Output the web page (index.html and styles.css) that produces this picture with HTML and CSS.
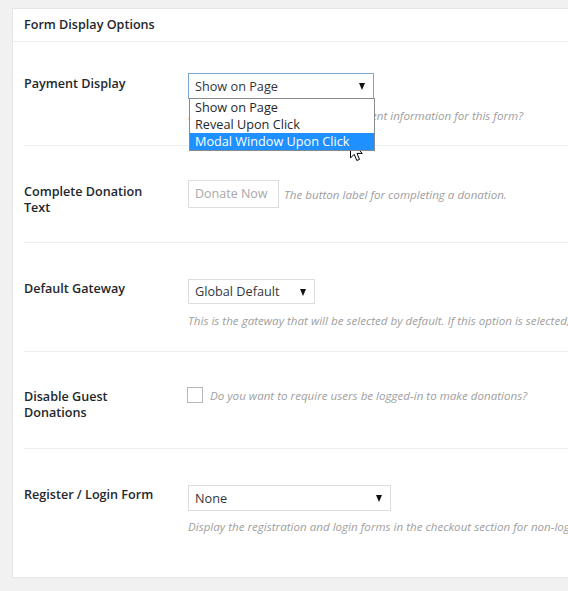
FILE: index.html
```html
<!DOCTYPE html>
<html>
<head>
<meta charset="utf-8">
<link rel="stylesheet" href="styles.css">
</head>
<body>
<div class="panel">
  <div class="panel-head">Form Display Options</div>
  <div class="rows">
    <div class="row r1">
      <div class="label">Payment Display</div>
      <div class="field">
        <div class="select focused w-pay">
          <span class="val">Show on Page</span><i class="arrow"></i>
          <ul class="dropdown">
            <li>Show on Page</li>
            <li>Reveal Upon Click</li>
            <li class="hl">Modal Window Upon Click</li>
          </ul>
        </div>
        <p class="desc">How would you like to display payment information for this form?</p>
      </div>
    </div>
    <div class="row r2">
      <div class="label">Complete Donation Text</div>
      <div class="field inline">
        <div class="input">Donate Now</div>
        <span class="desc-inline">The button label for completing a donation.</span>
      </div>
    </div>
    <div class="row r3">
      <div class="label">Default Gateway</div>
      <div class="field">
        <div class="select w-gw"><span class="val">Global Default</span><i class="arrow"></i></div>
        <p class="desc">This is the gateway that will be selected by default. If this option is selected, the gateway will be used by default.</p>
      </div>
    </div>
    <div class="row r4">
      <div class="label">Disable Guest Donations</div>
      <div class="field inline">
        <span class="checkbox"></span>
        <span class="desc-inline">Do you want to require users be logged-in to make donations?</span>
      </div>
    </div>
    <div class="row r5">
      <div class="label">Register / Login Form</div>
      <div class="field">
        <div class="select w-reg"><span class="val">None</span><i class="arrow"></i></div>
        <p class="desc">Display the registration and login forms in the checkout section for non-logged-in users.</p>
      </div>
    </div>
  </div>
</div>
<svg class="cursor" width="14" height="22" viewBox="0 0 14 22"><path d="M0.5 0.5 L0.5 17 L4.2 13.3 L6.8 19.5 L9.5 18.4 L7 12.4 L12.3 12.4 Z" fill="#fff" stroke="#000" stroke-width="1" stroke-linejoin="miter"/></svg>
</body>
</html>
```
FILE: styles.css
```css
html, body {
  margin: 0;
  padding: 0;
  background: #f1f1f1;
  overflow: hidden;
  width: 568px;
  height: 591px;
  font-family: "Open Sans", "Noto Sans", sans-serif;
  color: #23282d;
}
.panel {
  margin: 8px 0 0 12px;
  width: 640px;
  background: #fff;
  border: 1px solid #e5e5e5;
  box-sizing: border-box;
  height: 570px;
}
.panel-head {
  height: 32px;
  line-height: 31px;
  border-bottom: 1px solid #eeeeee;
  padding-left: 11px;
  font-size: 12.6px;
  font-weight: 600;
  color: #23282d;
}
.rows {
  margin-left: 11px;
}
.row {
  display: flex;
  align-items: flex-start;
  box-sizing: border-box;
  border-bottom: 1px solid #eeeeee;
}
.r1 { height: 104px; padding-top: 31px; }
.r2 { height: 97px; padding-top: 34px; }
.r3 { height: 109px; padding-top: 36px; }
.r4 { height: 97px; padding-top: 35px; }
.r5 { height: 127px; padding-top: 36px; border-bottom: none; }
.label {
  width: 135px;
  flex: none;
  margin-right: 29px;
  font-size: 12.6px;
  font-weight: 600;
  line-height: 16px;
  margin-top: 3px;
}
.r1 .label { margin-top: 3px; }
.r2 .label { margin-top: 4px; }
.r3 .label { margin-top: 2px; }
.r4 .label { margin-top: 2px; }
.r5 .label { margin-top: 2px; }
.field {
  flex: 1;
  min-width: 0;
}
.field.inline {
  display: flex;
  align-items: center;
  white-space: nowrap;
}
.select {
  position: relative;
  box-sizing: border-box;
  border: 1px solid #dddddd;
  background: #fff;
  height: 25px;
  font-size: 12.7px;
  line-height: 23px;
  padding-left: 6px;
  color: #32373c;
}
.select.focused {
  border-color: #7aa7d3;
  height: 26px;
  line-height: 24px;
}
.w-pay { width: 186px; }
.w-gw { width: 127px; }
.w-reg { width: 203px; height: 26px; line-height: 24px; }
.arrow {
  position: absolute;
  right: 8px;
  top: 50%;
  margin-top: -3px;
  width: 0;
  height: 0;
  border-left: 3.5px solid transparent;
  border-right: 3.5px solid transparent;
  border-top: 7px solid #111;
}
.dropdown {
  position: absolute;
  left: 0;
  top: 24px;
  width: 184px;
  margin: 0;
  padding: 0;
  list-style: none;
  background: #fff;
  border: 1px solid #8a8a8a;
  z-index: 2;
}
.dropdown li {
  height: 17px;
  line-height: 17px;
  font-size: 12.7px;
  padding-left: 5px;
  color: #23282d;
  white-space: nowrap;
}
.dropdown li.hl {
  background: #1e90ff;
  color: #fff;
}
.desc {
  margin: 8px 0 0;
  font-size: 11.6px;
  font-style: italic;
  line-height: 18px;
  color: #a0a0a0;
  white-space: nowrap;
}
.r5 .desc { margin-top: 7px; }
.desc-inline {
  font-size: 11.6px;
  font-style: italic;
  color: #a0a0a0;
  margin-left: 5px;
}
.input {
  box-sizing: border-box;
  width: 91px;
  height: 28px;
  border: 1px solid #dddddd;
  font-size: 12.5px;
  line-height: 26px;
  padding-left: 6px;
  color: #a8a8a8;
}
.checkbox {
  display: inline-block;
  box-sizing: border-box;
  width: 16px;
  height: 16px;
  border: 1px solid #b4b9be;
  margin-left: -1px;
  margin-right: 2px;
}
.cursor {
  position: absolute;
  left: 350px;
  top: 141px;
}
```
